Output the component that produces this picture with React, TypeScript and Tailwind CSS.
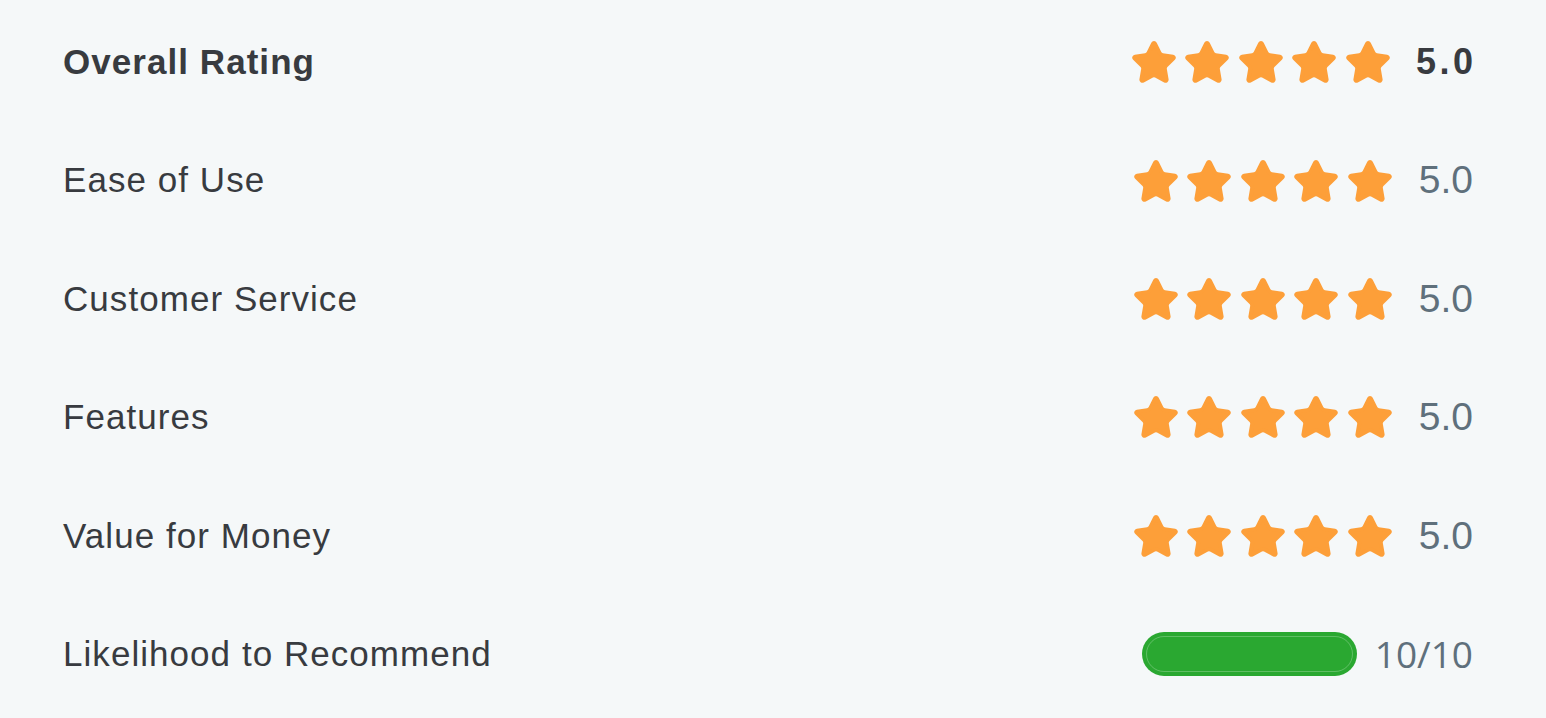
import React from 'react';

interface Rating {
    label: string;
    value: string;
    kind: 'stars' | 'bar';
    bold?: boolean;
}

const ratings: Rating[] = [
    { label: 'Overall Rating', value: '5.0', kind: 'stars', bold: true },
    { label: 'Ease of Use', value: '5.0', kind: 'stars' },
    { label: 'Customer Service', value: '5.0', kind: 'stars' },
    { label: 'Features', value: '5.0', kind: 'stars' },
    { label: 'Value for Money', value: '5.0', kind: 'stars' },
    { label: 'Likelihood to Recommend', value: '10/10', kind: 'bar' },
];

const Star: React.FC = () => (
    <svg viewBox="1 1 22 21.2" className="w-[44px] h-[42px]" fill="#fd9f39" stroke="#fd9f39" strokeWidth={2} strokeLinejoin="round">
        <path d="M11.525 2.295a.53.53 0 0 1 .95 0l2.31 4.679a2.123 2.123 0 0 0 1.595 1.16l5.166.756a.53.53 0 0 1 .294.904l-3.736 3.638a2.123 2.123 0 0 0-.611 1.878l.882 5.14a.53.53 0 0 1-.771.56l-4.618-2.428a2.122 2.122 0 0 0-1.973 0L6.396 21.01a.53.53 0 0 1-.77-.56l.881-5.139a2.122 2.122 0 0 0-.611-1.879L2.16 9.795a.53.53 0 0 1 .294-.906l5.165-.755a2.122 2.122 0 0 0 1.597-1.16z" />
    </svg>
);

const RatingRow: React.FC<{ rating: Rating }> = ({ rating }) => (
    <div className="flex items-center justify-between h-[118.4px]">
        <span className={`text-[35px] tracking-[0.03em] ${rating.bold ? 'font-bold' : ''} text-[#383b40]`}>
            {rating.label}
        </span>
        <div className="flex items-center">
            {rating.kind === 'stars' ? (
                <div className={`flex items-center gap-[9.5px] ${rating.bold ? 'mr-[26px]' : 'mr-[27px]'}`}>
                    {[0, 1, 2, 3, 4].map((i) => (
                        <Star key={i} />
                    ))}
                </div>
            ) : (
                <div className="w-[215px] h-[44px] rounded-full bg-[#2aa831] p-[4px] mr-[18px]">
                    <div className="w-full h-full rounded-full border border-white/25" />
                </div>
            )}
            {rating.kind === 'bar' ? (
                <span className="text-[37px] text-[#5f707c] font-['Open_Sans',sans-serif]">{rating.value}</span>
            ) : rating.bold ? (
                <span className="text-[36px] font-bold text-[#383b40] tracking-[3.5px] -mr-[3.5px]">{rating.value}</span>
            ) : (
                <span className="text-[39px] text-[#5f707c]">{rating.value}</span>
            )}
        </div>
    </div>
);

export default function App() {
    return (
        <div className="w-[1546px] h-[718px] bg-[#f5f8f9] pl-[63px] pr-[73px] pt-[3px] font-['Liberation_Sans',Arial,sans-serif]">
            {ratings.map((r) => (
                <RatingRow key={r.label} rating={r} />
            ))}
        </div>
    );
}
